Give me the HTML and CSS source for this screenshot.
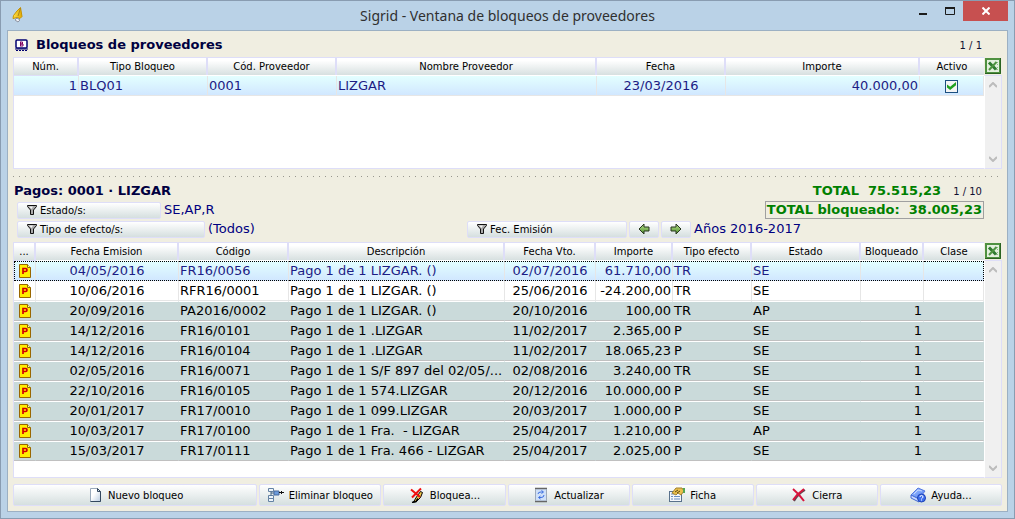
FILE: index.html
```html
<!DOCTYPE html>
<html lang="es">
<head>
<meta charset="utf-8">
<title>Sigrid - Ventana de bloqueos de proveedores</title>
<link rel="stylesheet" href="styles.css">
</head>
<body>
<svg class="sprite" aria-hidden="true">
  <defs>
    <linearGradient id="greenFill" x1="0" y1="0" x2="0" y2="1"><stop offset="0" stop-color="#b5e08c"/><stop offset="1" stop-color="#4f8f2c"/></linearGradient>
    <linearGradient id="blueFill" x1="0" y1="0" x2="1" y2="1"><stop offset="0" stop-color="#a9c8ff"/><stop offset="1" stop-color="#4878f0"/></linearGradient>
    <linearGradient id="pageFill" x1="0" y1="0" x2="1" y2="1"><stop offset="0.4" stop-color="#ffffff"/><stop offset="1" stop-color="#b9cbe0"/></linearGradient>
    <linearGradient id="appFill" x1="0" y1="0" x2="1" y2="0"><stop offset="0" stop-color="#ffe14a"/><stop offset="1" stop-color="#e0a800"/></linearGradient>
  </defs>
  <symbol id="funnel" viewBox="0 0 10 10"><path d="M0.5 0.5h9v1L6.5 5v4.500h-3V5L0.500 1.500z" fill="#aaa" stroke="#111"/><path d="M2 1.500h4L4.500 4z" fill="#f4f4f4"/></symbol>
  <symbol id="excel" viewBox="0 0 16 16"><rect x="1" y="1" width="14" height="14" fill="#e4f0de" stroke="#4f9140" stroke-width="2"/><path d="M0 15.500h15.500V0" fill="none" stroke="#2a6320"/><path d="M11 4.500h2M12 6.500h1M12 9.500h1M11 11.500h2" stroke="#8fba86"/><path d="M4 4.500L11 11.500" stroke="#2f7a2f" stroke-width="3"/><path d="M11.500 4L4 12" stroke="#4f9440" stroke-width="2"/></symbol>
  <symbol id="pago" viewBox="0 0 12 14"><path d="M.5.500h8l3 3v10H.500z" fill="#ffee00" stroke="#996600"/><path d="M8.500.500v3h3" fill="#fff9a0" stroke="#996600"/><path d="M4 10V4.500h2.500a1.300 1.300 0 0 1 0 3H4" fill="none" stroke="#d00000" stroke-width="1.700"/></symbol>
  <symbol id="arrow" viewBox="0 0 12 12"><path d="M1 6l5-5v3h5v4H6v3z" fill="url(#greenFill)" stroke="#26361f"/></symbol>
  <symbol id="chevron" viewBox="0 0 8 6"><path d="M0 5l4-4 4 4" fill="none" stroke="#bcbcbc" stroke-width="2"/></symbol>
</svg>

<div class="window">
  <header class="titlebar">
    <svg class="app-icon" viewBox="0 0 12 16" aria-hidden="true"><path d="M8.500.500l1.500 9-2 2-3-1-4 1 .5-3L5 4z" fill="url(#appFill)" stroke="#c79300"/><path d="M8.500 1L6 9" stroke="#a98520"/><path d="M3 13l2-2 3 2-2 2z" fill="#eef0f5" stroke="#8d94a3"/></svg>
    <h1 class="window-title">Sigrid - Ventana de bloqueos de proveedores</h1>
    <div class="window-controls">
      <button class="control" aria-label="Minimizar"><svg width="10" height="10" viewBox="0 0 10 10"><path d="M1 8h8" stroke="#1c1c1c" stroke-width="2"/></svg></button>
      <button class="control" aria-label="Maximizar"><svg width="10" height="8" viewBox="0 0 10 8"><path d="M.5 1v6.500h9V1" fill="none" stroke="#1c1c1c"/><path d="M0 1h10" stroke="#1c1c1c" stroke-width="2"/></svg></button>
      <button class="control close" aria-label="Cerrar ventana"><svg width="8" height="8" viewBox="0 0 8 8"><path d="M.5.500l7 7M7.500.500l-7 7" stroke="#fff" stroke-width="2"/></svg></button>
    </div>
  </header>

  <main class="content">
    <div class="section-head">
      <svg class="section-icon" width="13" height="12" viewBox="0 0 13 12" aria-hidden="true"><rect x="1" y="1" width="11" height="8" rx="1" fill="#fff" stroke="#000070" stroke-width="1.500"/><path d="M5 3h2.500v2H5m0 0h3v2H5M5.500 3v4" fill="none" stroke="#800060"/><path d="M0 10h13" stroke="#000070"/><path d="M1 11.500h2m1 0h2m1 0h2m1 0h2" stroke="#000070"/></svg>
      <h2 class="section-title">Bloqueos de proveedores</h2>
      <span class="counter">1 / 1</span>
    </div>

    <section class="grid grid-locks">
      <div class="grid-body">
        <table>
          <colgroup><col style="width:65px"><col style="width:129px"><col style="width:129px"><col style="width:260px"><col style="width:129px"><col style="width:194px"><col style="width:64px"></colgroup>
          <thead><tr><th>Núm.</th><th>Tipo Bloqueo</th><th>Cód. Proveedor</th><th>Nombre Proveedor</th><th>Fecha</th><th>Importe</th><th>Activo</th></tr></thead>
          <tbody><tr class="current"><td class="num">1</td><td>BLQ01</td><td>0001</td><td>LIZGAR</td><td class="mid">23/03/2016</td><td class="num">40.000,00</td><td class="mid"><input class="tick" type="checkbox" checked aria-label="Activo"></td></tr></tbody>
        </table>
      </div>
      <div class="grid-side">
        <button class="export" aria-label="Exportar bloqueos a Excel"><svg><use href="#excel"/></svg></button>
        <div class="scrollbar"><svg class="chev"><use href="#chevron"/></svg><svg class="chev down"><use href="#chevron"/></svg></div>
      </div>
    </section>

    <div class="splitter"></div>

    <div class="payments-head">
      <h2 class="section-title">Pagos: 0001 · LIZGAR</h2>
      <strong class="total">TOTAL  75.515,23</strong>
      <span class="counter">1 / 10</span>
    </div>
    <div class="filters">
      <button class="filter filter-state"><svg class="funnel"><use href="#funnel"/></svg>Estado/s:</button>
      <span class="value">SE,AP,R</span>
      <strong class="total boxed">TOTAL bloqueado:  38.005,23</strong>
    </div>
    <div class="filters">
      <div class="filter-left">
        <button class="filter filter-effect"><svg class="funnel"><use href="#funnel"/></svg>Tipo de efecto/s:</button>
        <span class="value">(Todos)</span>
      </div>
      <div class="filter-right">
        <button class="filter filter-date"><svg class="funnel"><use href="#funnel"/></svg>Fec. Emisión</button>
        <button class="filter step" aria-label="Años anteriores"><svg class="arrow"><use href="#arrow"/></svg></button>
        <button class="filter step" aria-label="Años siguientes"><svg class="arrow next"><use href="#arrow"/></svg></button>
        <span class="value">Años 2016-2017</span>
      </div>
    </div>

    <section class="grid grid-payments">
      <div class="grid-body">
        <table>
          <colgroup><col style="width:22px"><col style="width:143px"><col style="width:110px"><col style="width:216px"><col style="width:91px"><col style="width:77px"><col style="width:79px"><col style="width:109px"><col style="width:63px"><col style="width:60px"></colgroup>
          <thead><tr><th>...</th><th>Fecha Emision</th><th>Código</th><th>Descripción</th><th>Fecha Vto.</th><th>Importe</th><th>Tipo efecto</th><th>Estado</th><th>Bloqueado</th><th>Clase</th></tr></thead>
          <tbody>
            <tr class="current focused"><td class="mark"><svg><use href="#pago"/></svg></td><td class="mid">04/05/2016</td><td>FR16/0056</td><td>Pago 1 de 1 LIZGAR. ()</td><td class="mid">02/07/2016</td><td class="num">61.710,00</td><td>TR</td><td>SE</td><td></td><td></td></tr>
            <tr><td class="mark"><svg><use href="#pago"/></svg></td><td class="mid">10/06/2016</td><td>RFR16/0001</td><td>Pago 1 de 1 LIZGAR. ()</td><td class="mid">25/06/2016</td><td class="num">-24.200,00</td><td>TR</td><td>SE</td><td></td><td></td></tr>
            <tr class="locked"><td class="mark"><svg><use href="#pago"/></svg></td><td class="mid">20/09/2016</td><td>PA2016/0002</td><td>Pago 1 de 1 LIZGAR. ()</td><td class="mid">20/10/2016</td><td class="num">100,00</td><td>TR</td><td>AP</td><td class="num">1</td><td></td></tr>
            <tr class="locked"><td class="mark"><svg><use href="#pago"/></svg></td><td class="mid">14/12/2016</td><td>FR16/0101</td><td>Pago 1 de 1 .LIZGAR</td><td class="mid">11/02/2017</td><td class="num">2.365,00</td><td>P</td><td>SE</td><td class="num">1</td><td></td></tr>
            <tr class="locked"><td class="mark"><svg><use href="#pago"/></svg></td><td class="mid">14/12/2016</td><td>FR16/0104</td><td>Pago 1 de 1 .LIZGAR</td><td class="mid">11/02/2017</td><td class="num">18.065,23</td><td>P</td><td>SE</td><td class="num">1</td><td></td></tr>
            <tr class="locked"><td class="mark"><svg><use href="#pago"/></svg></td><td class="mid">02/05/2016</td><td>FR16/0071</td><td>Pago 1 de 1 S/F 897 del 02/05/...</td><td class="mid">02/08/2016</td><td class="num">3.240,00</td><td>TR</td><td>SE</td><td class="num">1</td><td></td></tr>
            <tr class="locked"><td class="mark"><svg><use href="#pago"/></svg></td><td class="mid">22/10/2016</td><td>FR16/0105</td><td>Pago 1 de 1 574.LIZGAR</td><td class="mid">20/12/2016</td><td class="num">10.000,00</td><td>P</td><td>SE</td><td class="num">1</td><td></td></tr>
            <tr class="locked"><td class="mark"><svg><use href="#pago"/></svg></td><td class="mid">20/01/2017</td><td>FR17/0010</td><td>Pago 1 de 1 099.LIZGAR</td><td class="mid">20/03/2017</td><td class="num">1.000,00</td><td>P</td><td>SE</td><td class="num">1</td><td></td></tr>
            <tr class="locked"><td class="mark"><svg><use href="#pago"/></svg></td><td class="mid">10/03/2017</td><td>FR17/0100</td><td>Pago 1 de 1 Fra.  - LIZGAR</td><td class="mid">25/04/2017</td><td class="num">1.210,00</td><td>P</td><td>AP</td><td class="num">1</td><td></td></tr>
            <tr class="locked"><td class="mark"><svg><use href="#pago"/></svg></td><td class="mid">15/03/2017</td><td>FR17/0111</td><td>Pago 1 de 1 Fra. 466 - LIZGAR</td><td class="mid">25/04/2017</td><td class="num">2.025,00</td><td>P</td><td>SE</td><td class="num">1</td><td></td></tr>
          </tbody>
        </table>
      </div>
      <div class="grid-side">
        <button class="export" aria-label="Exportar pagos a Excel"><svg><use href="#excel"/></svg></button>
        <div class="scrollbar"><svg class="chev"><use href="#chevron"/></svg><svg class="chev down"><use href="#chevron"/></svg></div>
      </div>
    </section>

    <footer class="actions">
      <button class="action"><svg viewBox="0 0 16 16"><path d="M3.500 1.500h7l3 3v10h-10z" fill="url(#pageFill)" stroke="#9aa9bb"/><path d="M13.500 4.500v10h-10" fill="none" stroke="#33475f"/><path d="M10.500 1.500v3h3z" fill="#dce7f3" stroke="#33475f"/></svg>Nuevo bloqueo</button>
      <button class="action"><svg viewBox="0 0 16 16"><path d="M.5 1.500h5v3h-5zM.500 8.500h5v3h-5zM.500 11.500h5v3h-5z" fill="#eef4fa" stroke="#6482a4"/><path d="M3 4.500v4M3 6h4" stroke="#40607f"/><path d="M6 4h5v4H6z" fill="#6c9bdc" stroke="#47699b"/><path d="M11 5.500h5M13.500 4v3" stroke="#111"/></svg>Eliminar bloqueo</button>
      <button class="action"><svg viewBox="0 0 16 16"><path d="M11.500 4.500l2 1-2 5-4 4-3 .5 3-5z" fill="#f1c84b" stroke="#000"/><path d="M3 15.500l4-1 2-3" fill="none" stroke="#000" stroke-width="1.500"/><path d="M2 2.500l9 7.500M12 1.500L3 10.500" stroke="#f01010" stroke-width="2"/></svg>Bloquea...</button>
      <button class="action"><svg viewBox="0 0 16 16"><rect x="2" y="1" width="12" height="14" fill="#cfe0f8"/><path d="M2 1.500h12M2 14.500h12" stroke="#666" stroke-width="1.500"/><path d="M2.500 2v12M13.500 2v12" stroke="#9eaaba"/><path d="M5 7q0-2 3-2h2M8.500 3.500L10.500 5l-2 1.500M11 8q0 2.500-3 2.500H6M7.500 9L5.500 10.500l2 1.500" fill="none" stroke="#3c6ee0"/></svg>Actualizar</button>
      <button class="action"><svg viewBox="0 0 16 16"><rect x=".5" y="4.500" width="12" height="10" fill="#f4f7fb" stroke="#59718c"/><path d="M2 7h3M2 9.500h2M5 9.500h6M2 12h2M5 12h6" stroke="#6a8ec0"/><path d="M3 6l4-5h6l2 3-3 4-3-2-2 2z" fill="#eac04c" stroke="#a08030"/><path d="M6 5l3-2M8 6l3-2" stroke="#5c4510"/><path d="M14 1h2v5h-2z" fill="#54a653"/></svg>Ficha</button>
      <button class="action"><svg viewBox="0 0 16 16"><path d="M3 14Q7 7 14 3" fill="none" stroke="#5f4850" stroke-width="2"/><path d="M2 2q6 5 11 12M2 13Q6 7 13 2" fill="none" stroke="#d8143c" stroke-width="2"/></svg>Cierra</button>
      <button class="action"><svg viewBox="0 0 16 16"><path d="M1 8l7-7 7 3-6 8z" fill="url(#blueFill)" stroke="#5578e0"/><path d="M1 8v3l8 4v-3z" fill="#c9d9ff" stroke="#3f67d3"/><path d="M4 7l4-4 4 1" fill="none" stroke="#c5d8ff"/><circle cx="11.500" cy="11" r="4" fill="#3f70ed" stroke="#1e41b5"/><path d="M10 10q0-1.500 1.500-1.500T13 10q0 .8-1.500 1.600M11.500 12.500v1" fill="none" stroke="#fff"/></svg>Ayuda...</button>
    </footer>
  </main>
</div>
</body>
</html>
```
FILE: styles.css
```css
* { box-sizing: border-box; }

body {
  margin: 0;
  font-family: "DejaVu Sans", Verdana, sans-serif;
  font-size: 13px;
  color: #000;
}

button { font: inherit; color: inherit; margin: 0; padding: 0; }
h1, h2 { margin: 0; }
svg { display: block; flex: none; }
.sprite { position: absolute; width: 0; height: 0; }

.window {
  display: flex;
  flex-direction: column;
  min-height: 100vh;
  padding: 0 6px 6px;
  border: 1px solid #899cb1;
  background: #bad2e7;
}

.titlebar {
  display: grid;
  grid-template-columns: 1fr auto 1fr;
  height: 29px;
}
.app-icon { width: 12px; height: 16px; margin: 6px 0 0 5px; }
.window-title {
  font: 400 14px/29px "Noto Sans", "Segoe UI", sans-serif;
  color: #303030;
}
.window-controls { display: flex; justify-content: flex-end; align-items: flex-start; }
.control {
  display: grid;
  place-items: center;
  width: 27px;
  height: 20px;
  border: 0;
  background: none;
}
.control.close { width: 45px; background: #c75050; }

.content {
  display: flex;
  flex: 1;
  flex-direction: column;
  padding: 0 5px 5px;
  border: 1px solid #9cb0c3;
  background: #f0eee1;
}

.section-head, .payments-head { display: flex; align-items: center; }
.section-head { height: 26px; padding: 2px 20px 0 2px; }
.payments-head { height: 20px; padding: 0 20px 0 1px; }
.section-icon { margin-right: 8px; }
.section-title { font-size: 13px; font-weight: 700; line-height: 18px; color: #000040; }
.counter { font-size: 10px; color: #101030; }
.section-head .counter { margin-left: auto; }
.payments-head .total { margin-left: auto; margin-right: 12px; }
.total { color: #008000; white-space: pre; line-height: 16px; }
.total.boxed { margin-left: auto; margin-right: 18px; padding: 0 1px; border: 1px solid #a0a0a0; }

.grid { display: flex; }
.grid-locks { height: 112px; }
.grid-payments { flex: 1; margin-top: 3px; }
.grid-body {
  flex: 1;
  min-width: 0;
  border: 1px solid #dedef8;
  border-width: 0 0 1px 1px;
  background: #fff;
}
.grid-side { display: flex; flex-direction: column; width: 18px; }
.export { width: 16px; height: 18px; margin-left: 1px; border: 0; background: none; }
.export svg { width: 16px; height: 16px; }
.scrollbar {
  display: flex;
  flex: 1;
  flex-direction: column;
  align-items: center;
  justify-content: space-between;
  padding: 6px 0;
  border: 1px solid #dedef8;
  border-left: 1px solid #fff;
  background: #f0f0f0;
}
.chev { width: 8px; height: 6px; }
.chev.down { transform: rotate(180deg); }

table { width: 100%; border-collapse: separate; border-spacing: 0; table-layout: fixed; }
th {
  height: 18px;
  padding: 0;
  border-top: 1px solid #dedef8;
  border-right: 2px solid #dedef8;
  background: linear-gradient(#fff 15%, #d7e0e0);
  font-size: 10px;
  font-weight: 400;
  line-height: 17px;
}
th:last-child { border-right: 0; }
thead::after { content: ""; display: table-row; height: 1px; background: #dedef8; }
td {
  height: 20px;
  padding: 1px 1px 0;
  border-right: 1px solid #e6e6e6;
  border-bottom: 1px solid #e6e6e6;
  line-height: 18px;
  white-space: pre;
  overflow: hidden;
}
td.num { text-align: right; }
td.mid { text-align: center; }
td.mark { padding: 0 0 0 5px; }
td.mark svg { width: 12px; height: 14px; }
.current { color: #1c1c84; background: linear-gradient(#e3ffff, #d0e6ff); }
.focused td { padding-top: 0; border-block: 1px dotted #000; }
.focused td:first-child { border-left: 1px dotted #000; padding-left: 4px; }
.focused td:last-child { border-right: 1px dotted #000; }
.locked { background: #cadada; }
.locked td { padding-top: 0; border-top: 1px solid #fff; border-bottom-color: #c0c0c0; border-right-color: #cadada; }

.tick {
  appearance: none;
  display: grid;
  place-items: center;
  width: 13px;
  height: 13px;
  margin: 0 auto;
  border: 1px solid #1c4f80;
  background: #f4f4f4;
}
.tick:checked::after {
  content: "";
  width: 9px;
  height: 8px;
  background: #21a121;
  clip-path: polygon(0 30%, 35% 60%, 100% 0, 100% 40%, 35% 100%, 0 70%);
}

.splitter {
  height: 12px;
  background-image: linear-gradient(90deg, #98978e 1px, transparent 1px);
  background-repeat: repeat-x;
  background-size: 6px 1px;
  background-position: 0 7px;
}

.filters { display: flex; align-items: center; height: 20px; padding-left: 4px; }
.payments-head + .filters { height: 18px; }
.filter-left, .filter-right { display: flex; align-items: center; }
.filter-left { flex: 0 0 46%; }
.filter-right { gap: 2px; margin-left: -3px; }
.filter, .action {
  border: 1px solid #dedef8;
  border-radius: 2px;
  background: linear-gradient(#fff, #d5dfdf);
  font-size: 10px;
}
.filter { display: flex; align-items: center; height: 17px; padding-left: 9px; }
.filter-state { width: 144px; }
.filter-effect { width: 188px; }
.filter-date { width: 160px; }
.filter.step { justify-content: center; width: 30px; padding: 0; }
.funnel { width: 10px; height: 10px; margin-right: 3px; }
.arrow { width: 12px; height: 12px; }
.arrow.next { transform: scaleX(-1); }
.value { padding-left: 3px; color: #000080; line-height: 18px; white-space: nowrap; }
.filter-right .value { padding-left: 1px; }

.actions {
  display: grid;
  grid-template-columns: 2fr repeat(6, 1fr);
  gap: 2px;
  margin-top: 6px;
}
.action { display: flex; align-items: center; justify-content: center; gap: 5px; height: 22px; }
.action svg { width: 16px; height: 16px; }
```
